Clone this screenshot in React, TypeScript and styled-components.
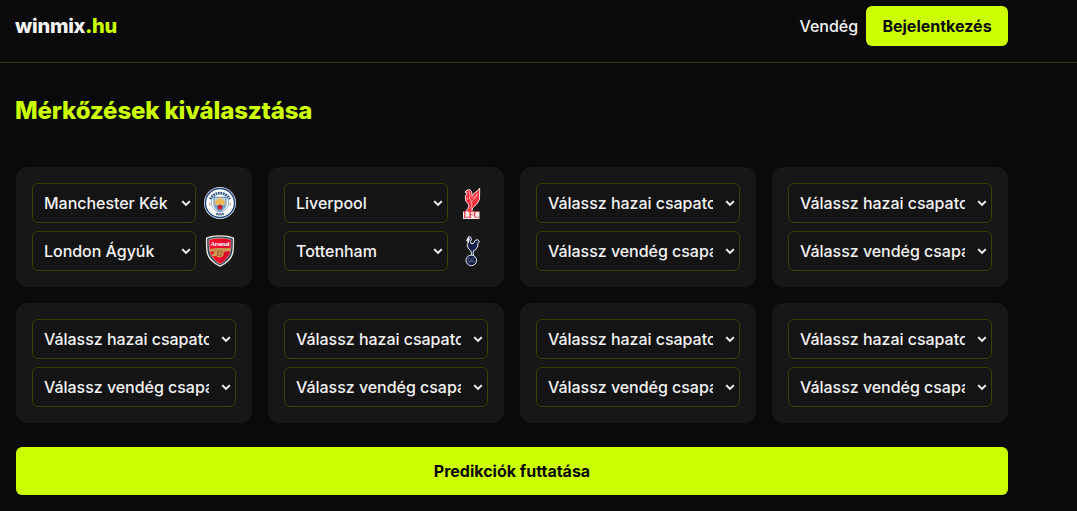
import React from "react";
import styled, { createGlobalStyle } from "styled-components";

const Global = createGlobalStyle`
  * { box-sizing: border-box; }
  body { margin: 0; background: #0a0a0a; color: #f2f2f2; font: 450 16px/24px Inter, sans-serif; }
  button, select { font: inherit; color: inherit; }
`;
const Page = styled.div`
  height: 511px;
  overflow: hidden;
`;
const Header = styled.header`
  padding: 6px 0 16px;
  border-bottom: 1px solid #2f380a;
`;
const Container = styled.div`
  width: 1024px;
  padding: 0 16px;
`;
const HeaderRow = styled(Container)`
  display: flex;
  align-items: center;
  justify-content: space-between;
`;
const Brand = styled.div`
  margin-left: -1px;
  font-size: 20px;
  line-height: 28px;
  font-weight: 800;
  letter-spacing: -0.25px;
`;
const Accent = styled.span`
  color: #ccff00;
`;
const Account = styled.div`
  display: flex;
  align-items: center;
  gap: 8px;
  letter-spacing: -0.05px;
`;
const PrimaryButton = styled.button<{ $wide?: boolean }>`
  border: 0;
  border-radius: 6px;
  background: #ccff00;
  color: #0a0a0a;
  font-weight: 700;
  letter-spacing: 0;
  width: ${(p) => (p.$wide ? "100%" : "142px")};
  height: ${(p) => (p.$wide ? 48 : 40)}px;
  padding: 0 16px;
`;
const Title = styled.h1`
  margin: 32px 0 41px -1px;
  font-size: 24px;
  line-height: 31px;
  font-weight: 800;
  letter-spacing: -0.14px;
  color: #ccff00;
`;
const Grid = styled.div`
  display: grid;
  grid-template-columns: repeat(4, 1fr);
  gap: 16px;
  margin-bottom: 24px;
`;
const Card = styled.div`
  display: flex;
  flex-direction: column;
  gap: 8px;
  min-width: 0;
  padding: 16px;
  border-radius: 12px;
  background: #171717;
`;
const TeamRow = styled.div`
  display: flex;
  align-items: center;
  gap: 8px;
`;
const SelectBox = styled.div`
  position: relative;
  display: flex;
  flex: 1;
  min-width: 0;
`;
const TeamSelect = styled.select`
  appearance: none;
  width: 100%;
  height: 40px;
  padding: 0 26px 0 11px;
  border: 1px solid #384207;
  border-radius: 6px;
  background: #141414;
  letter-spacing: -0.03px;
`;
const Chevron = styled.svg`
  position: absolute;
  right: 5px;
  top: 17px;
  width: 10px;
  height: 7px;
  pointer-events: none;
`;
const Crest = styled.svg`
  width: 32px;
  height: 32px;
  flex: none;
`;

const CityCrest = () => (
  <Crest viewBox="0 0 32 32">
    <circle cx="16" cy="16" r="16" fill="#f4f6f8" />
    <circle cx="16" cy="16" r="14.6" fill="#fff" stroke="#244a7c" strokeWidth="1.5" />
    <path d="M6.2 12.2A10.9 10.9 0 0 1 25.8 12.2" fill="none" stroke="#35537e" strokeWidth="2.5" strokeDasharray="1.8 .7" />
    <path d="M12.3 26.7Q16 28 19.7 26.7" fill="none" stroke="#35537e" strokeWidth="2.5" strokeDasharray="1.4 .6" />
    <circle cx="16" cy="16" r="8.8" fill="#fff" stroke="#7ea6ca" strokeWidth=".9" />
    <path d="M10 10.3h12v6.7q0 5-6 7.3-6-2.3-6-7.3z" fill="#b5d7ec" stroke="#45688f" strokeWidth=".8" />
    <path d="M10.6 13.5l1.2.8 1-2.5 1.2 1.2L16 9l2 4 1.2-1.2 1 2.500 1.200-.8-.6 4.200h-9.600z" fill="#ecb851" />
    <path d="M10.500 18h11l-2.300 4-3.200 1.800-3.200-1.800z" fill="#6aa9d8" />
    <path d="M16 17.300l2.800 2-.9 3.200h-3.800l-.9-3.200z" fill="#c51f36" />
    <path d="M5 15.300l.6 1.200 1.300.1-1 .9.3 1.300-1.200-.7zM27 15.300l-.6 1.200-1.300.1 1 .9-.3 1.300 1.200-.7z" fill="#c5a765" />
  </Crest>
);
const ArsenalCrest = () => (
  <Crest viewBox="0 0 32 32">
    <path d="M2 2.500Q9-.2 16 .2 23-.2 30 2.500q.5 12-1 17Q26.500 27 16 32 5.500 27 3 19.500 1.500 14.500 2 2.500z" fill="#e9e1ce" />
    <path d="M3.300 3.500Q9.500 1.300 16 1.400q6.500-.1 12.700 2.100.3 11.500-1.100 15.500Q25 26 16 30.500 7 26 4.400 19 3 15 3.300 3.500z" fill="#213b68" />
    <path d="M5 4.700Q10.500 2.900 16 3t11 1.700q.1 10-1.100 13.600Q23.700 24.700 16 29 8.300 24.700 6.100 18.300 4.900 14.700 5 4.700z" fill="#f00d2e" stroke="#dfc88b" strokeWidth=".7" />
    <path d="M19 3.200q4.500.3 8 1.500 0 10-1.100 13.600Q23.700 24.700 16 28.800z" fill="#c90e2d" opacity=".5" />
    <text x="16" y="10.500" textAnchor="middle" fontFamily="Liberation Serif, serif" fontSize="6.300" fontWeight="700" fill="#fff" textLength="19">Arsenal</text>
    <path d="M6 13.700l10-.6 7 .1 3.700-.4v3.200l-4 .2-3.500 1q1.500 3-1.300 4.600l-3 .6-2.700-1.400-3 .6-1.700-1.900 3-1.700-.2-1.200-4.500-.3z" fill="#cda153" />
    <circle cx="15.500" cy="18.300" r="2.300" fill="none" stroke="#8c442d" strokeWidth=".8" />
    <path d="M8 15.300h14M12 21l6-5M13 16l5 5" stroke="#9d6530" strokeWidth=".5" />
  </Crest>
);
const LiverpoolCrest = () => (
  <Crest viewBox="1 0 32 32">
    <path d="M24.700 1l-2.400 3-4 2.800-1.200 2-.5-4.100-1.800-2.200-2.600.5-2.200 2 1 1.200 1.300-.3-2 3.300.4 4.700 2.200 2.600 1 2-1 3.300-3 3.200-.6 1.800h3l4-.5 1.700-1.400-1-1 .5-3 2-1.600 3-3.200 2-4z" fill="#f5303e" stroke="#f8dede" strokeWidth="1" />
    <path d="M13.500 4l1.500 3-.5 4 2 3.500 4-3.500 2-5M16 10l2 1 4-3M15 15l2 1-1 6M12 11l1 2" fill="none" stroke="#ffd6d8" strokeWidth=".65" />
    <path d="M8 24.500h16.500V32H8z" fill="#fdeeee" />
    <text x="8.500" y="31.400" fontFamily="Liberation Serif, serif" fontSize="9.300" fontWeight="700" fill="#e51c30" textLength="15.500" lengthAdjust="spacingAndGlyphs">LFC</text>
  </Crest>
);
const TottenhamCrest = () => (
  <Crest viewBox="1 0 32 32">
    <path d="M13.500 1.500l2 .5 1 2.300-1 2.200.5 2 2.500-.1 1.700-3.100 2.600-.6 1.700 1.900-1.500 1-.2 3.500-2 3.400-2.300 1.200-.4 2.600.7 3h-2.500l.3-3-1-2.800-2.500-2.500-1-3.100 1.500-3-2-1.200 1-2z" fill="#14204b" stroke="#eef0f4" strokeWidth="1" />
    <path d="M12 3.200l2-.7 1 2-1 2-1.500 1.200-.3-2z" fill="#dfe2e8" />
    <circle cx="16.300" cy="25.400" r="5.300" fill="#14204b" stroke="#e8eaf0" strokeWidth="1" />
    <path d="M12 23.500q4 2 8-1M11.500 26.500q4.500-1.500 9 .5M13 29q1-2.500 5-3.500" fill="none" stroke="#7f89a8" strokeWidth=".5" />
  </Crest>
);

const HOME = "Válassz hazai csapatot";
const AWAY = "Válassz vendég csapatot";
type Team = { name: string; crest?: React.ReactNode };
const matches: Team[][] = [
  [{ name: "Manchester Kék", crest: <CityCrest /> }, { name: "London Ágyúk", crest: <ArsenalCrest /> }],
  [{ name: "Liverpool", crest: <LiverpoolCrest /> }, { name: "Tottenham", crest: <TottenhamCrest /> }],
  ...Array.from({ length: 6 }, () => [{ name: HOME }, { name: AWAY }]),
];

export default function App() {
  return (
    <Page>
      <Global />
      <Header>
        <HeaderRow>
          <Brand>winmix<Accent>.hu</Accent></Brand>
          <Account>
            <span>Vendég</span>
            <PrimaryButton>Bejelentkezés</PrimaryButton>
          </Account>
        </HeaderRow>
      </Header>
      <Container as="main">
        <Title>Mérkőzések kiválasztása</Title>
        <Grid>
          {matches.map((teams, i) => (
            <Card key={i}>
              {teams.map((team) => (
                <TeamRow key={team.name}>
                  <SelectBox>
                    <TeamSelect defaultValue={team.name}>
                      <option>{team.name}</option>
                    </TeamSelect>
                    <Chevron viewBox="0 0 10 7">
                      <path d="M1.200 1.200L5 5l3.800-3.800" fill="none" stroke="#fff" strokeWidth="1.900" />
                    </Chevron>
                  </SelectBox>
                  {team.crest}
                </TeamRow>
              ))}
            </Card>
          ))}
        </Grid>
        <PrimaryButton $wide>Predikciók futtatása</PrimaryButton>
      </Container>
    </Page>
  );
}
